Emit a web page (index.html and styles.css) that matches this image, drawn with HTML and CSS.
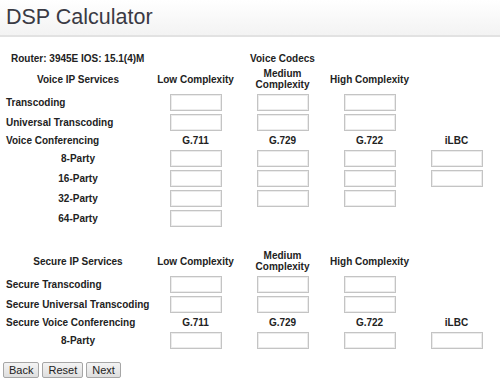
FILE: index.html
```html
<!DOCTYPE html>
<html>
<head>
<meta charset="utf-8">
<title>DSP Calculator</title>
<link rel="stylesheet" href="styles.css">
</head>
<body>
<div class="header"><h1 class="title">DSP Calculator</h1></div>
<div class="content">
<table class="calc">
  <colgroup>
    <col class="c-label"><col class="c-val"><col class="c-val"><col class="c-val"><col class="c-val">
  </colgroup>
  <tr class="r-info">
    <td colspan="2" class="router">Router: 3945E IOS: 15.1(4)M</td>
    <td class="ctr">Voice Codecs</td><td></td><td></td>
  </tr>
  <tr class="r-head">
    <td class="ctr">Voice IP Services</td>
    <td class="ctr">Low Complexity</td>
    <td class="ctr">Medium<br>Complexity</td>
    <td class="ctr">High Complexity</td>
    <td></td>
  </tr>
  <tr class="r-in">
    <td>Transcoding</td>
    <td class="ctr"><input class="fld" type="text"></td>
    <td class="ctr"><input class="fld" type="text"></td>
    <td class="ctr"><input class="fld" type="text"></td>
    <td></td>
  </tr>
  <tr class="r-in">
    <td>Universal Transcoding</td>
    <td class="ctr"><input class="fld" type="text"></td>
    <td class="ctr"><input class="fld" type="text"></td>
    <td class="ctr"><input class="fld" type="text"></td>
    <td></td>
  </tr>
  <tr class="r-txt">
    <td>Voice Conferencing</td>
    <td class="ctr">G.711</td><td class="ctr">G.729</td><td class="ctr">G.722</td><td class="ctr">iLBC</td>
  </tr>
  <tr class="r-in">
    <td class="ctr">8-Party</td>
    <td class="ctr"><input class="fld" type="text"></td>
    <td class="ctr"><input class="fld" type="text"></td>
    <td class="ctr"><input class="fld" type="text"></td>
    <td class="ctr"><input class="fld" type="text"></td>
  </tr>
  <tr class="r-in">
    <td class="ctr">16-Party</td>
    <td class="ctr"><input class="fld" type="text"></td>
    <td class="ctr"><input class="fld" type="text"></td>
    <td class="ctr"><input class="fld" type="text"></td>
    <td class="ctr"><input class="fld" type="text"></td>
  </tr>
  <tr class="r-in">
    <td class="ctr">32-Party</td>
    <td class="ctr"><input class="fld" type="text"></td>
    <td class="ctr"><input class="fld" type="text"></td>
    <td class="ctr"><input class="fld" type="text"></td>
    <td></td>
  </tr>
  <tr class="r-in">
    <td class="ctr">64-Party</td>
    <td class="ctr"><input class="fld" type="text"></td>
    <td></td><td></td><td></td>
  </tr>
  <tr class="r-in"><td colspan="5"></td></tr>
  <tr class="r-head">
    <td class="ctr">Secure IP Services</td>
    <td class="ctr">Low Complexity</td>
    <td class="ctr">Medium<br>Complexity</td>
    <td class="ctr">High Complexity</td>
    <td></td>
  </tr>
  <tr class="r-in">
    <td>Secure Transcoding</td>
    <td class="ctr"><input class="fld" type="text"></td>
    <td class="ctr"><input class="fld" type="text"></td>
    <td class="ctr"><input class="fld" type="text"></td>
    <td></td>
  </tr>
  <tr class="r-in">
    <td>Secure Universal Transcoding</td>
    <td class="ctr"><input class="fld" type="text"></td>
    <td class="ctr"><input class="fld" type="text"></td>
    <td class="ctr"><input class="fld" type="text"></td>
    <td></td>
  </tr>
  <tr class="r-txt">
    <td>Secure Voice Conferencing</td>
    <td class="ctr">G.711</td><td class="ctr">G.729</td><td class="ctr">G.722</td><td class="ctr">iLBC</td>
  </tr>
  <tr class="r-in">
    <td class="ctr">8-Party</td>
    <td class="ctr"><input class="fld" type="text"></td>
    <td class="ctr"><input class="fld" type="text"></td>
    <td class="ctr"><input class="fld" type="text"></td>
    <td class="ctr"><input class="fld" type="text"></td>
  </tr>
</table>
<div class="buttons">
  <button class="btn" type="button">Back</button>
  <button class="btn" type="button">Reset</button>
  <button class="btn" type="button">Next</button>
</div>
</div>
</body>
</html>
```

FILE: styles.css
```css
html, body {
  margin: 0;
  padding: 0;
  background: #fff;
}
body {
  font-family: "Liberation Sans", Arial, sans-serif;
  color: #222;
}
.header {
  height: 35px;
  border-bottom: 2px solid #e2e2e2;
  background: linear-gradient(#ffffff, #f3f3f3);
  padding-left: 6px;
}
.title {
  margin: 0;
  font-weight: normal;
  font-size: 21.5px;
  line-height: 34px;
  color: #3a3a44;
}
.content {
  padding: 13px 0 0 4px;
}
.calc {
  border-collapse: collapse;
  table-layout: fixed;
  width: 496px;
  font-size: 10px;
  font-weight: bold;
}
.c-label { width: 148px; }
.c-val { width: 87px; }
.calc td {
  padding: 0 2px;
  vertical-align: middle;
  white-space: nowrap;
  line-height: 11px;
}
.ctr { text-align: center; }
.router { padding-left: 7px !important; }
.r-info td { height: 16px; }
.r-head td { height: 26px; }
.r-in td { height: 20px; }
.r-txt td { height: 16px; }
.fld {
  display: block;
  margin: 0 auto;
  width: 52px;
  height: 17px;
  box-sizing: border-box;
  border: 1px solid #c4c4c4;
  box-shadow: inset 0 0 0 1px #ececec;
  background: #fff;
  padding: 0;
}
.buttons {
  display: flex;
  gap: 3px;
  margin-top: 12px;
  margin-left: -1px;
}
.btn {
  font-family: "Liberation Sans", Arial, sans-serif;
  font-size: 11px;
  height: 16px;
  padding: 0 5px;
  border: 1px solid #a6a6a6;
  border-radius: 2px;
  background: linear-gradient(#f4f4f4, #dedede);
  color: #222;
  line-height: 14px;
}
```
